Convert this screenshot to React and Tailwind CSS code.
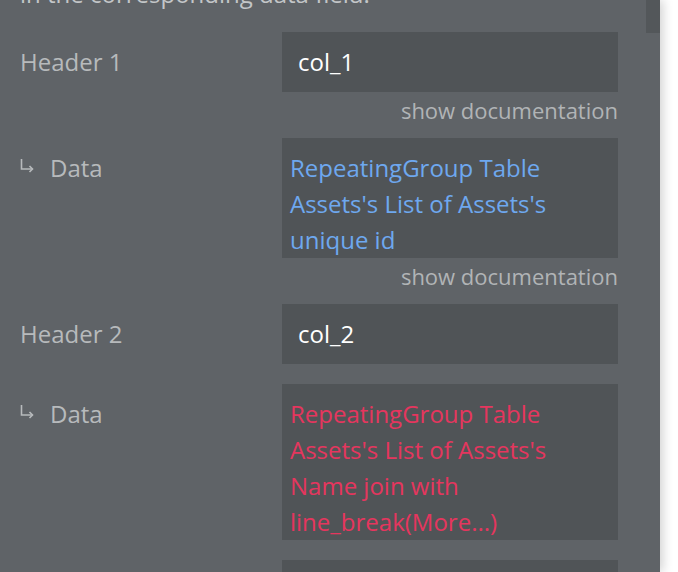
function SubArrow() {
  return (
    <svg width="14" height="16" viewBox="0 0 14 16" fill="none" stroke="#b7babc" strokeWidth="1.6" className="mr-4 -mt-1">
      <path d="M1.5 1 V11 H12.5" />
      <path d="M9.5 8 L12.5 11 L9.5 14" />
    </svg>
  )
}

export default function App() {
  return (
    <div
      className="w-[678px] h-[572px] overflow-hidden bg-white flex"
      style={{ fontFamily: '"Open Sans", "DejaVu Sans", sans-serif' }}
    >
      {/* Property panel */}
      <div className="relative w-[660px] h-full bg-[#5f6367] shadow-[3px_0_10px_rgba(0,0,0,0.18)] overflow-hidden pl-5 pr-[42px]">
        {/* scrollbar thumb */}
        <div className="absolute right-0 top-0 w-[14px] h-[33px] bg-[#53575a]"></div>

        <p className="mt-[-24px] text-[24px] leading-[36px] text-[#c3c6c8]">
          in the corresponding data field.
        </p>

        {/* Header 1 */}
        <div className="flex items-start mt-5">
          <div className="w-[262px] pt-3 text-[24px] leading-[36px] text-[#b7babc]">Header 1</div>
          <div className="flex-1">
            <div className="bg-[#505457] h-[60px] pl-4 py-3 text-[24px] leading-[36px] text-white">col_1</div>
            <div className="mt-1 text-right text-[22px] leading-[28px] text-[#b1b4b6]">show documentation</div>
          </div>
        </div>

        {/* Data 1 */}
        <div className="flex items-start mt-[14px]">
          <div className="w-[262px] pt-3 text-[24px] leading-[36px] text-[#b7babc] flex items-center">
            <SubArrow />
            <span>Data</span>
          </div>
          <div className="flex-1">
            <div className="bg-[#505457] pl-2 pr-2 pt-3 text-[24px] leading-[36px] text-[#6ea8ef]">
              RepeatingGroup Table Assets's List of Assets's unique id
            </div>
            <div className="mt-1 text-right text-[22px] leading-[28px] text-[#b1b4b6]">show documentation</div>
          </div>
        </div>

        {/* Header 2 */}
        <div className="flex items-start mt-[14px]">
          <div className="w-[262px] pt-3 text-[24px] leading-[36px] text-[#b7babc]">Header 2</div>
          <div className="flex-1">
            <div className="bg-[#505457] h-[60px] pl-4 py-3 text-[24px] leading-[36px] text-white">col_2</div>
          </div>
        </div>

        {/* Data 2 */}
        <div className="flex items-start mt-5">
          <div className="w-[262px] pt-3 text-[24px] leading-[36px] text-[#b7babc] flex items-center">
            <SubArrow />
            <span>Data</span>
          </div>
          <div className="flex-1">
            <div className="bg-[#505457] pl-2 pr-2 pt-3 text-[24px] leading-[36px] text-[#e5365e]">
              RepeatingGroup Table Assets's List of Assets's Name join with line_break(More...)
            </div>
          </div>
        </div>

        {/* Header 3 (cut off) */}
        <div className="flex items-start mt-5">
          <div className="w-[262px]"></div>
          <div className="flex-1">
            <div className="bg-[#505457] h-[60px]"></div>
          </div>
        </div>
      </div>
    </div>
  )
}
